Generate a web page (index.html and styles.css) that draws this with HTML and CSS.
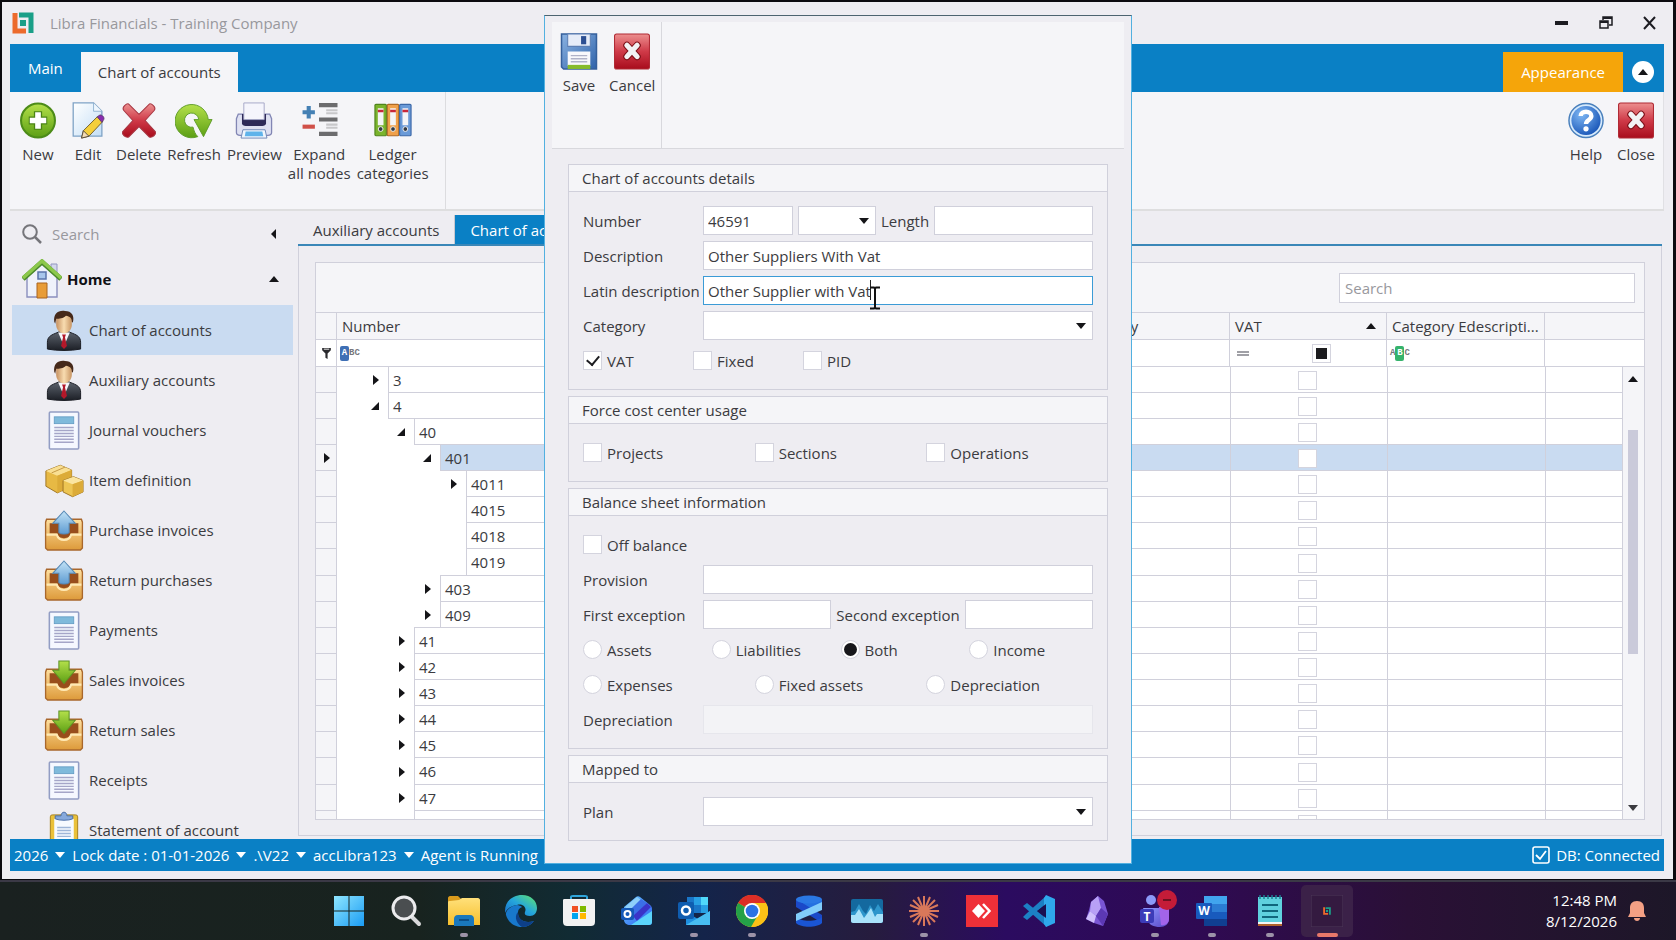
FILE: index.html
```html
<!DOCTYPE html>
<html lang="en">
<head>
<meta charset="utf-8">
<title>Libra Financials - Training Company</title>
<link rel="stylesheet" href="styles.css">
</head>
<body>
<svg class="defs" aria-hidden="true">
  <defs>
    <linearGradient id="gGreen" x1="0" y1="0" x2="0" y2="1"><stop offset="0" stop-color="#b4e04a"/><stop offset="1" stop-color="#5c9f14"/></linearGradient>
    <linearGradient id="gRed" x1="0" y1="0" x2="0" y2="1"><stop offset="0" stop-color="#ec8f8f"/><stop offset=".5" stop-color="#cf3a48"/><stop offset="1" stop-color="#a80c1c"/></linearGradient>
    <linearGradient id="gBlue" x1="0" y1="0" x2="0" y2="1"><stop offset="0" stop-color="#c2e2f6"/><stop offset="1" stop-color="#5e9cd2"/></linearGradient>
    <linearGradient id="gPaper" x1="0" y1="0" x2="1" y2="1"><stop offset="0" stop-color="#ffffff"/><stop offset="1" stop-color="#c3def6"/></linearGradient>
    <linearGradient id="gTray" x1="0" y1="0" x2="0" y2="1"><stop offset="0" stop-color="#ffe0a0"/><stop offset="1" stop-color="#dd9a3a"/></linearGradient>
    <linearGradient id="gSuit" x1="0" y1="0" x2="0" y2="1"><stop offset="0" stop-color="#5e646e"/><stop offset="1" stop-color="#1c1f26"/></linearGradient>
    <linearGradient id="gFace" x1="0" y1="0" x2="1" y2="0"><stop offset="0" stop-color="#c69060"/><stop offset=".5" stop-color="#f8dcb0"/><stop offset="1" stop-color="#c99663"/></linearGradient>
    <linearGradient id="gDisk" x1="0" y1="0" x2="1" y2="1"><stop offset="0" stop-color="#8bb3e2"/><stop offset="1" stop-color="#2f62aa"/></linearGradient>
    <radialGradient id="gHelp" cx=".35" cy=".3" r=".8"><stop offset="0" stop-color="#7fb8f4"/><stop offset="1" stop-color="#1350b4"/></radialGradient>
    <linearGradient id="gWin" x1="0" y1="0" x2="1" y2="1"><stop offset="0" stop-color="#8fe6ff"/><stop offset="1" stop-color="#1a9cf4"/></linearGradient>
    <linearGradient id="gFolder" x1="0" y1="0" x2="0" y2="1"><stop offset="0" stop-color="#ffe07a"/><stop offset="1" stop-color="#f7bf2c"/></linearGradient>
    <linearGradient id="gEdge" x1="0" y1="1" x2="1" y2="0"><stop offset="0" stop-color="#1668c8"/><stop offset=".5" stop-color="#25a6dc"/><stop offset="1" stop-color="#62e66a"/></linearGradient>
    <linearGradient id="gMail" x1="0" y1="0" x2="1" y2="1"><stop offset="0" stop-color="#6ac8ff"/><stop offset="1" stop-color="#2a5cf0"/></linearGradient>
    <linearGradient id="gTeams" x1="0" y1="0" x2="1" y2="1"><stop offset="0" stop-color="#8f9aff"/><stop offset="1" stop-color="#5a48c8"/></linearGradient>

    <symbol id="person" viewBox="0 0 36 42">
      <path d="M1 40V33c0-5 3-7 8-9l5-2h8l5 2c5 2 8 4 8 9v7c-10 2-24 2-34 0z" fill="url(#gSuit)" stroke="#1b1d24" stroke-width="1"/>
      <path d="M12 23l6 14 6-14z" fill="#f6f6fa"/><path d="M16 25h4l-1 3 2 9-3 3-3-3 2-9z" fill="#b3182a"/>
      <path d="M10 9c0-5 3-7 8-7s8 2 8 7v6c0 5-4 9-8 9s-8-4-8-9z" fill="url(#gFace)"/>
      <path d="M8 12C7 4 12 0 19 1c7 0 10 5 8 12l-1-1c0-4-2-5-6-6-3 3-7 3-10 3l-1 5z" fill="#45291a"/>
    </symbol>
    <symbol id="doc" viewBox="0 0 34 42">
      <rect x="2" y="2" width="30" height="38" rx="1" fill="#f5f8ff" stroke="#929dc4" stroke-width="1.6"/>
      <rect x="7" y="7" width="20" height="7" fill="#7fbadb" stroke="#5f99c2" stroke-width=".8"/>
      <path d="M7 18h20M7 21h20M7 24h20M7 27h20M7 30h20M7 33h20" stroke="#a5a6c8" stroke-width="1.5"/>
    </symbol>
    <symbol id="boxes" viewBox="0 0 42 36">
      <path d="M2 8l15-6 12 5v17l-15 7L2 24z" fill="#e7b944" stroke="#9e7424"/>
      <path d="M2 8l12 5 15-6-12-5z" fill="#f9df92"/><path d="M14 13v18l15-7V7z" fill="#dcab38"/><path d="M8 10l14-6" stroke="#c29641"/>
      <path d="M20 18l11-4 10 4v12l-11 5-10-5z" fill="#edc553" stroke="#9e7424"/>
      <path d="M20 18l10 4 11-4-10-4z" fill="#fbe5a0"/><path d="M30 22v13l11-5V18z" fill="#dcab38"/>
    </symbol>
    <symbol id="tray" viewBox="0 0 38 40">
      <path d="M2 9h34l1 3v25l-2 2H3l-2-2V12z" fill="url(#gTray)" stroke="#a9672c" stroke-width="1.4"/>
      <path d="M5 13h28v10h-7c-1 6-13 6-14 0H5z" fill="#984e1c"/>
      <path d="M2 24h10c2 7 12 7 14 0h10" fill="none" stroke="#ffe9b4" stroke-width="2"/>
    </symbol>
    <symbol id="trayup" viewBox="0 0 38 40"><use href="#tray"/><path d="M19 1l11 12h-6v9c-2 2-8 2-10 0v-9H8z" fill="url(#gBlue)" stroke="#5688b4"/></symbol>
    <symbol id="traydown" viewBox="0 0 38 40"><use href="#tray"/><path d="M14 1h10v9h6L19 23 8 10h6z" fill="url(#gGreen)" stroke="#5d9226"/></symbol>
    <symbol id="clip" viewBox="0 0 34 42">
      <rect x="3" y="5" width="28" height="35" rx="2" fill="#eac13a" stroke="#a8811c"/>
      <path d="M7 9h20v30H7z" fill="#f6faff"/><path d="M10 18h14M10 21h14M10 24h14M10 27h14" stroke="#9fb6d8" stroke-width="1.5"/>
      <path d="M8 9V6h6c0-5 6-5 6 0h6v3c-4 2-14 2-18 0z" fill="#86a9dc" stroke="#4a6ea8"/>
    </symbol>
    <symbol id="redx" viewBox="0 0 36 36">
      <rect x="1" y="1" width="34" height="34" rx="2" fill="url(#gRed)" stroke="#b02a34"/>
      <path d="M13 12l10 11M23 12L13 23" stroke="#7c1018" stroke-width="7" stroke-linecap="round"/>
      <path d="M13 12l10 11M23 12L13 23" stroke="#f2f2f4" stroke-width="5" stroke-linecap="round"/>
    </symbol>
    <symbol id="logo" viewBox="0 0 22 22">
      <path d="M3 1v18h11" fill="none" stroke="#ec6a2c" stroke-width="5"/><path d="M7 3h12v18" fill="none" stroke="#1a9f88" stroke-width="5"/>
      <rect x="8" y="8" width="6" height="6" fill="#1a9f88"/>
    </symbol>
  </defs>
</svg>

<div class="window">
  <header class="titlebar">
    <svg class="logo"><use href="#logo"/></svg>
    <h1 class="title">Libra Financials - Training Company</h1>
    <div class="winbtns">
      <button type="button" aria-label="Minimize"><svg viewBox="0 0 14 14"><path d="M0 7h13" stroke="#1c1c22" stroke-width="4"/></svg></button>
      <button type="button" aria-label="Restore"><svg viewBox="0 0 14 14"><path d="M4 4V1h9v8h-3" fill="none" stroke="#1c1c22" stroke-width="1.500"/><path d="M4 2h9" stroke="#1c1c22" stroke-width="2"/><rect x="1" y="5" width="8" height="7" fill="none" stroke="#1c1c22" stroke-width="1.500"/><path d="M1 6h8" stroke="#1c1c22" stroke-width="2"/></svg></button>
      <button type="button" aria-label="Close window"><svg viewBox="0 0 14 14"><path d="M1 1l11 12M12 1L1 13" stroke="#1c1c22" stroke-width="2"/></svg></button>
    </div>
  </header>

  <nav class="ribbon-tabs">
    <button type="button" class="rtab">Main</button>
    <button type="button" class="rtab rtab-active">Chart of accounts</button>
    <button type="button" class="rtab rtab-look">Appearance</button>
    <button type="button" class="collapse" aria-label="Collapse ribbon"><i class="tri up"></i></button>
  </nav>

  <div class="ribbon">
    <div class="rgroup">
      <button type="button" class="rbtn"><svg viewBox="0 0 36 36"><circle cx="18" cy="18" r="16.500" fill="url(#gGreen)" stroke="#4c8b18" stroke-width="2"/><path d="M18 9v18M9 18h18" stroke="#4b8316" stroke-width="8"/><path d="M18 10v16M10 18h16" stroke="#fff" stroke-width="5.500"/></svg><span>New</span></button>
      <button type="button" class="rbtn"><svg viewBox="0 0 36 40"><path d="M2 1h22l9 9v27H2z" fill="url(#gPaper)" stroke="#7fa3c6" stroke-width="1.400"/><path d="M24 1v9h9" fill="#eef6fd" stroke="#8fb1cf"/><path d="M13 31L28 16l6 5-15 16-8 2z" fill="#f4cf3c" stroke="#6b5a2c"/><path d="M28 16l3-2c3 0 5 3 4 5l-2 3z" fill="#8a2bb0" stroke="#5c3c70"/><path d="M13 31l6 6-8 2z" fill="#f3dcb4" stroke="#54493a"/></svg><span>Edit</span></button>
      <button type="button" class="rbtn"><svg viewBox="0 0 36 36"><path d="M8 2l10 10L28 2c2-1 7 3 5 6L24 18l10 11c1 3-3 6-6 5L18 24 8 34c-3 1-7-2-6-5l10-11L3 8C1 5 6 1 8 2z" fill="url(#gRed)" stroke="#a83844"/></svg><span>Delete</span></button>
      <button type="button" class="rbtn"><svg viewBox="0 0 40 36"><path d="M20 36A17.500 17.500 0 1 1 35 17h4L30 35 20 17h5a7.500 7.500 0 1 0-6 8c1 4 2 7 5 10z" fill="url(#gGreen)" stroke="#5f9c2a"/></svg><span>Refresh</span></button>
      <button type="button" class="rbtn"><svg viewBox="0 0 40 40"><path d="M3 13h34l2 5v15c0 2-2 3-4 3H5c-2 0-4-1-4-3V18z" fill="#dfe1f2" stroke="#8286b4" stroke-width="1.400"/><path d="M7 13v10c0 2 2 3 4 3h18c2 0 4-1 4-3V13z" fill="#2e2a58"/><path d="M9 1h22v18H9z" fill="#f5f5fc" stroke="#a3a5c6"/><path d="M8 30h24l2 9H6z" fill="#f0f6fd" stroke="#6b84b4"/><path d="M11 32h18l1 5H10z" fill="#5fb3ea"/></svg><span>Preview</span></button>
      <button type="button" class="rbtn"><svg viewBox="0 0 36 36"><path d="M8 4v12M2 10h12" stroke="#4480b4" stroke-width="4"/><path d="M2 24h12" stroke="#d05048" stroke-width="4"/><path d="M18 3h18M18 17h18M18 31h18" stroke="#6c6c6e" stroke-width="4"/><path d="M25 8h11M25 11h11M25 22h11M25 25h11" stroke="#c8c8ca" stroke-width="2"/></svg><span>Expand<br>all nodes</span></button>
      <button type="button" class="rbtn"><svg viewBox="0 0 40 36"><g stroke-width="1.200"><rect x="1" y="1" width="12" height="33" rx="1" fill="#7ab42c" stroke="#4f831c"/><rect x="14" y="1" width="12" height="33" rx="1" fill="#f0a04a" stroke="#b06a24"/><rect x="27" y="1" width="12" height="33" rx="1" fill="#6a9ad8" stroke="#3c68a8"/></g><path d="M4 5h6v18H4zM17 5h6v18h-6zM30 5h6v18h-6z" fill="#f4f4f6"/><path d="M4 8h6M17 8h6M30 8h6" stroke="#c8283a" stroke-width="2.500"/><g fill="#333a44" stroke="#eee"><circle cx="7" cy="27" r="2.500"/><circle cx="20" cy="27" r="2.500"/><circle cx="33" cy="27" r="2.500"/></g></svg><span>Ledger<br>categories</span></button>
    </div>
    <div class="rgroup rgroup-end">
      <button type="button" class="rbtn"><svg viewBox="0 0 38 38"><circle cx="19" cy="19" r="17.500" fill="#d6eafc" stroke="#4a80bc" stroke-width="1.500"/><circle cx="19" cy="19" r="15" fill="url(#gHelp)"/><path d="M13.500 14.500c0-6 11-6 11 0 0 4-5.500 4-5.500 8" fill="none" stroke="#fff" stroke-width="4.500"/><circle cx="19" cy="27.500" r="2.700" fill="#fff"/></svg><span>Help</span></button>
      <button type="button" class="rbtn"><svg><use href="#redx"/></svg><span>Close</span></button>
    </div>
  </div>

  <div class="main">
    <aside class="sidebar">
      <div class="side-search">
        <svg viewBox="0 0 20 20"><circle cx="8" cy="8" r="6.800" fill="none" stroke="#75757a" stroke-width="2"/><path d="M13 13l6 6" stroke="#75757a" stroke-width="2.500"/></svg>
        <input type="search" aria-label="Search menu" placeholder="Search">
        <i class="tri left"></i>
      </div>
      <button type="button" class="home">
        <svg viewBox="0 0 40 40"><path d="M29 5h6v12h-6z" fill="#d3d7ec" stroke="#9296c0"/><path d="M5 18L20 5l15 13v20H5z" fill="#eff2fb" stroke="#8b8fbe" stroke-width="1.400"/><path d="M1 20L20 3l19 17" fill="none" stroke="#4c8a2c" stroke-width="5"/><path d="M1 19L20 2l19 17" fill="none" stroke="#8cc84c" stroke-width="3.500"/><path d="M16 13h8v7h-8z" fill="#a8c6ec" stroke="#5b74ac" stroke-width="1.500"/><path d="M15 24h10v15H15z" fill="#e89c38" stroke="#a86420"/></svg>
        <span>Home</span><i class="tri up"></i>
      </button>
      <ul class="menu">
        <li><a href="#" class="on"><svg><use href="#person"/></svg>Chart of accounts</a></li>
        <li><a href="#"><svg><use href="#person"/></svg>Auxiliary accounts</a></li>
        <li><a href="#"><svg><use href="#doc"/></svg>Journal vouchers</a></li>
        <li><a href="#"><svg><use href="#boxes"/></svg>Item definition</a></li>
        <li><a href="#"><svg><use href="#trayup"/></svg>Purchase invoices</a></li>
        <li><a href="#"><svg><use href="#trayup"/></svg>Return purchases</a></li>
        <li><a href="#"><svg><use href="#doc"/></svg>Payments</a></li>
        <li><a href="#"><svg><use href="#traydown"/></svg>Sales invoices</a></li>
        <li><a href="#"><svg><use href="#traydown"/></svg>Return sales</a></li>
        <li><a href="#"><svg><use href="#doc"/></svg>Receipts</a></li>
        <li><a href="#"><svg><use href="#clip"/></svg>Statement of account</a></li>
      </ul>
    </aside>

    <section class="docs">
      <div class="doc-tabs">
        <button type="button" class="dtab">Auxiliary accounts</button>
        <button type="button" class="dtab dtab-on">Chart of accounts</button>
      </div>
      <div class="doc-body">
        <div class="grid">
          <div class="grid-search"><input type="search" aria-label="Search accounts" placeholder="Search"></div>
          <table class="head">
            <colgroup><col class="c-ind"><col><col class="c-cat"><col class="c-vat"><col class="c-ed"><col class="c-pad"></colgroup>
            <tr class="titles"><th></th><th>Number</th><th>Category</th><th><span class="sort">VAT<i class="tri up"></i></span></th><th>Category Edescripti...</th><th></th></tr>
            <tr class="filters">
              <td class="ind"><svg class="funnel" viewBox="0 0 10 12"><path d="M1 1h8v2L6 6v5l-2-1V6L1 3z" fill="#2a2a2e"/><path d="M2.500 2h5" stroke="#ddd"/></svg></td>
              <td><span class="abc"><b class="a">A</b>BC</span></td><td></td>
              <td><span class="vatfilter"><i class="eq"></i><input type="checkbox" class="box mixed" aria-label="Filter by VAT"></span></td>
              <td><span class="abc">A<b class="b">B</b>C</span></td><td></td>
            </tr>
          </table>
          <div class="rows">
            <table class="body">
              <colgroup><col class="c-ind"><col><col class="c-cat"><col class="c-vat"><col class="c-ed"><col class="c-end"></colgroup>
              <tr><td class="ind"></td><td class="num"><div class="node l1"><i class="tri right"></i><span>3</span></div></td><td></td><td class="chk"><input type="checkbox" class="box" aria-label="VAT 3"></td><td></td><td></td></tr>
              <tr><td class="ind"></td><td class="num"><div class="node l1"><i class="tri open"></i><span>4</span></div></td><td></td><td class="chk"><input type="checkbox" class="box" aria-label="VAT 4"></td><td></td><td></td></tr>
              <tr><td class="ind"></td><td class="num"><div class="node l2"><i class="tri open"></i><span>40</span></div></td><td></td><td class="chk"><input type="checkbox" class="box" aria-label="VAT 40"></td><td></td><td></td></tr>
              <tr class="sel"><td class="ind"><i class="tri right"></i></td><td class="num"><div class="node l3"><i class="tri open"></i><span>401</span></div></td><td></td><td class="chk"><input type="checkbox" class="box" aria-label="VAT 401"></td><td></td><td></td></tr>
              <tr><td class="ind"></td><td class="num"><div class="node l4"><i class="tri right"></i><span>4011</span></div></td><td></td><td class="chk"><input type="checkbox" class="box" aria-label="VAT 4011"></td><td></td><td></td></tr>
              <tr><td class="ind"></td><td class="num"><div class="node l4"><span>4015</span></div></td><td></td><td class="chk"><input type="checkbox" class="box" aria-label="VAT 4015"></td><td></td><td></td></tr>
              <tr><td class="ind"></td><td class="num"><div class="node l4"><span>4018</span></div></td><td></td><td class="chk"><input type="checkbox" class="box" aria-label="VAT 4018"></td><td></td><td></td></tr>
              <tr><td class="ind"></td><td class="num"><div class="node l4"><span>4019</span></div></td><td></td><td class="chk"><input type="checkbox" class="box" aria-label="VAT 4019"></td><td></td><td></td></tr>
              <tr><td class="ind"></td><td class="num"><div class="node l3"><i class="tri right"></i><span>403</span></div></td><td></td><td class="chk"><input type="checkbox" class="box" aria-label="VAT 403"></td><td></td><td></td></tr>
              <tr><td class="ind"></td><td class="num"><div class="node l3"><i class="tri right"></i><span>409</span></div></td><td></td><td class="chk"><input type="checkbox" class="box" aria-label="VAT 409"></td><td></td><td></td></tr>
              <tr><td class="ind"></td><td class="num"><div class="node l2"><i class="tri right"></i><span>41</span></div></td><td></td><td class="chk"><input type="checkbox" class="box" aria-label="VAT 41"></td><td></td><td></td></tr>
              <tr><td class="ind"></td><td class="num"><div class="node l2"><i class="tri right"></i><span>42</span></div></td><td></td><td class="chk"><input type="checkbox" class="box" aria-label="VAT 42"></td><td></td><td></td></tr>
              <tr><td class="ind"></td><td class="num"><div class="node l2"><i class="tri right"></i><span>43</span></div></td><td></td><td class="chk"><input type="checkbox" class="box" aria-label="VAT 43"></td><td></td><td></td></tr>
              <tr><td class="ind"></td><td class="num"><div class="node l2"><i class="tri right"></i><span>44</span></div></td><td></td><td class="chk"><input type="checkbox" class="box" aria-label="VAT 44"></td><td></td><td></td></tr>
              <tr><td class="ind"></td><td class="num"><div class="node l2"><i class="tri right"></i><span>45</span></div></td><td></td><td class="chk"><input type="checkbox" class="box" aria-label="VAT 45"></td><td></td><td></td></tr>
              <tr><td class="ind"></td><td class="num"><div class="node l2"><i class="tri right"></i><span>46</span></div></td><td></td><td class="chk"><input type="checkbox" class="box" aria-label="VAT 46"></td><td></td><td></td></tr>
              <tr><td class="ind"></td><td class="num"><div class="node l2"><i class="tri right"></i><span>47</span></div></td><td></td><td class="chk"><input type="checkbox" class="box" aria-label="VAT 47"></td><td></td><td></td></tr>
              <tr><td class="ind"></td><td class="num"><div class="node l2"><span></span></div></td><td></td><td class="chk"><input type="checkbox" class="box" aria-label="VAT next"></td><td></td><td></td></tr>
            </table>
            <div class="scroll"><i class="tri up"></i><div class="thumb"></div><i class="tri down"></i></div>
          </div>
        </div>
      </div>
    </section>
  </div>

  <footer class="status">
    <button type="button">2026<i class="tri down"></i></button>
    <button type="button">Lock date : 01-01-2026<i class="tri down"></i></button>
    <button type="button">.\V22<i class="tri down"></i></button>
    <button type="button">accLibra123<i class="tri down"></i></button>
    <span>Agent is Running</span>
    <span class="db"><svg viewBox="0 0 18 18"><rect x="1" y="1" width="16" height="16" rx="2" fill="none" stroke="#fff" stroke-width="1.600"/><path d="M4 9l4 4 6-8" fill="none" stroke="#fff" stroke-width="1.800"/></svg>DB: Connected</span>
  </footer>
</div>

<form class="dialog">
  <div class="dlg-ribbon">
    <div class="dlg-group">
      <button type="button" class="rbtn"><svg viewBox="0 0 36 36"><path d="M1 1h34v34H3l-2-2z" fill="url(#gDisk)" stroke="#36609c" stroke-width="1.500"/><path d="M7 1h22v12H7z" fill="#e6ecf8" stroke="#5d7fb4"/><path d="M20 3h5v8h-5z" fill="#2c4f92"/><path d="M7 18h22v14H7z" fill="#f8f8fc"/><path d="M10 22h16M10 25h16M10 28h16" stroke="#b0b2c8" stroke-width="1.400"/><path d="M7 31h22v4H7z" fill="#86bb2c"/></svg><span>Save</span></button>
      <button type="button" class="rbtn"><svg><use href="#redx"/></svg><span>Cancel</span></button>
    </div>
  </div>

  <div class="panels">
    <fieldset class="panel" aria-labelledby="p1">
      <h2 id="p1">Chart of accounts details</h2>
      <div class="pbody">
        <div class="line"><label class="lab" for="num">Number</label><input class="txt w-num" id="num" type="text" value="46591"><span class="drop w-kind"><select aria-label="Number kind"><option></option></select><i class="tri down"></i></span><label for="len">Length</label><input class="txt" id="len" type="text"></div>
        <div class="line"><label class="lab" for="desc">Description</label><input class="txt" id="desc" type="text" value="Other Suppliers With Vat"></div>
        <div class="line"><label class="lab" for="latin">Latin description</label><span class="focusbox"><input class="txt focus" id="latin" type="text" value="Other Supplier with Vat"><i class="caret"></i><svg class="ibeam" viewBox="0 0 12 24"><path d="M1 1.500h4l1 1 1-1h4M6 2v20M1 22.500h4l1-1 1 1h4" fill="none" stroke="#111" stroke-width="2"/></svg></span></div>
        <div class="line"><label class="lab" for="cat">Category</label><span class="drop"><select id="cat"><option></option></select><i class="tri down"></i></span></div>
        <div class="line flags">
          <label><input type="checkbox" class="box" checked>VAT</label>
          <label><input type="checkbox" class="box">Fixed</label>
          <label><input type="checkbox" class="box">PID</label>
        </div>
      </div>
    </fieldset>

    <fieldset class="panel" aria-labelledby="p2">
      <h2 id="p2">Force cost center usage</h2>
      <div class="pbody">
        <div class="line three">
          <label><input type="checkbox" class="box">Projects</label>
          <label><input type="checkbox" class="box">Sections</label>
          <label><input type="checkbox" class="box">Operations</label>
        </div>
      </div>
    </fieldset>

    <fieldset class="panel" aria-labelledby="p3">
      <h2 id="p3">Balance sheet information</h2>
      <div class="pbody">
        <div class="line three"><label><input type="checkbox" class="box">Off balance</label></div>
        <div class="line"><label class="lab" for="prov">Provision</label><input class="txt" id="prov" type="text"></div>
        <div class="line"><label class="lab" for="ex1">First exception</label><input class="txt" id="ex1" type="text"><label for="ex2">Second exception</label><input class="txt" id="ex2" type="text"></div>
        <div class="line four">
          <label><input type="radio" name="kind" class="dot">Assets</label>
          <label><input type="radio" name="kind" class="dot">Liabilities</label>
          <label><input type="radio" name="kind" class="dot" checked>Both</label>
          <label><input type="radio" name="kind" class="dot">Income</label>
        </div>
        <div class="line three">
          <label><input type="radio" name="kind" class="dot">Expenses</label>
          <label><input type="radio" name="kind" class="dot">Fixed assets</label>
          <label><input type="radio" name="kind" class="dot">Depreciation</label>
        </div>
        <div class="line"><label class="lab" for="dep">Depreciation</label><input class="txt" id="dep" type="text" disabled></div>
      </div>
    </fieldset>

    <fieldset class="panel" aria-labelledby="p4">
      <h2 id="p4">Mapped to</h2>
      <div class="pbody">
        <div class="line"><label class="lab" for="plan">Plan</label><span class="drop"><select id="plan"><option></option></select><i class="tri down"></i></span></div>
      </div>
    </fieldset>
  </div>
</form>

<div class="taskbar">
  <div class="apps">
    <button type="button" aria-label="Start"><svg viewBox="0 0 32 32"><path d="M1 1h14.500v14.500H1zM16.500 1H31v14.500H16.500zM1 16.500h14.500V31H1zM16.500 16.500H31V31H16.500z" fill="url(#gWin)"/></svg></button>
    <button type="button" aria-label="Search"><svg viewBox="0 0 32 32"><path d="M20 20l9 9" stroke="#d8d8da" stroke-width="4" stroke-linecap="round"/><circle cx="14" cy="13" r="11" fill="#4a4e50" stroke="#ececee" stroke-width="3"/></svg></button>
    <button type="button" class="run" aria-label="File Explorer"><svg viewBox="0 0 32 32"><path d="M0 3c0-1 1-2 2-2h8l3 3v6H0z" fill="#d99a1c"/><path d="M0 7c0-1 1-1 2-1l9-1 3-2h16c1 0 2 1 2 2v25H0z" fill="url(#gFolder)"/><path d="M6 31v-7c0-2 1-4 4-4h12c3 0 4 2 4 4v7z" fill="#1a78bc"/><path d="M11 25h10" stroke="#0c4f88" stroke-width="2"/></svg></button>
    <button type="button" aria-label="Edge"><svg viewBox="0 0 32 32"><path d="M0 16C0 6 8 0 17 0c9 0 15 6 15 13 0 5-3 8-7 8-4 0-6-1-5-4 2-4-2-9-8-7C5 11 1 15 0 18z" fill="url(#gEdge)"/><path d="M12 10C5 11 0 16 1 20c2 7 8 12 16 12 5 0 9-2 12-6-9 3-16-1-16-8 0-4 2-5 4-6-1-1-3-2-5-2z" fill="#1878cc"/><path d="M13 17c-5 5 0 13 4 15 5 0 9-2 12-6-9 3-16-1-16-9z" fill="#0d3f88"/></svg></button>
    <button type="button" aria-label="Store"><svg viewBox="0 0 32 32"><path d="M8 6V2c0-1 1-1 2-1h12c1 0 2 0 2 1v4" fill="none" stroke="#2fa6dc" stroke-width="2"/><path d="M0 5c0-1 1-1 2-1h28c1 0 2 0 2 1v22c0 3-2 4-4 4H4c-2 0-4-1-4-4z" fill="#f2f2f2"/><path d="M9 11h6v6H9z" fill="#f05022"/><path d="M17 11h6v6h-6z" fill="#7fba00"/><path d="M9 18h6v6H9z" fill="#00a4ef"/><path d="M17 18h6v6h-6z" fill="#ffb900"/></svg></button>
    <button type="button" aria-label="Outlook new"><svg viewBox="0 0 32 32"><path d="M3 12L15 2c1-1 3-1 4 0l10 8c2 2 2 3 2 5v12c0 2-1 3-3 3H9c-3 0-6-2-6-5z" fill="url(#gMail)"/><path d="M4 12L16 2l4 3L8 16z" fill="#8ed0fa"/><path d="M8 16L20 4l6 4-14 14z" fill="#3b6fe6"/><path d="M12 21l14-13 4 4-14 14z" fill="#3a34c8"/><path d="M31 16v11c0 2-1 3-3 3H10z" fill="#5bd4fb"/><rect x="0" y="13" width="13" height="12" rx="2" fill="#1559b8"/><circle cx="6.500" cy="19" r="3" fill="none" stroke="#fff" stroke-width="2"/></svg></button>
    <button type="button" class="run" aria-label="Outlook"><svg viewBox="0 0 32 32"><path d="M9 2h21v16H9z" fill="#1976c8"/><path d="M16 2h7v8h-7z" fill="#28a0e4"/><path d="M23 2h7v8h-7z" fill="#50d8fa"/><path d="M23 10h7v8h-7z" fill="#28a0e4"/><path d="M8 17l12 7 12-8v14H8z" fill="#1e8fe0"/><path d="M8 30l24-14v14z" fill="#48bdf2"/><rect x="0" y="7" width="16" height="17" rx="2" fill="#0f5db0"/><circle cx="8" cy="15.500" r="4" fill="none" stroke="#fff" stroke-width="2.500"/></svg></button>
    <button type="button" class="run" aria-label="Chrome"><svg viewBox="0 0 32 32"><circle cx="16" cy="16" r="16" fill="#fbc116"/><path d="M16 16L2.100 8A16 16 0 0 1 30 8z" fill="#dc2e26"/><path d="M16 16L2.100 8A16 16 0 0 0 15 32l7-12z" fill="#24a148"/><path d="M16 8h14a16 16 0 0 1-14 24l7-12z" fill="#fbc116"/><circle cx="16" cy="16" r="8" fill="#fff"/><circle cx="16" cy="16" r="6.300" fill="#2c72e4"/></svg></button>
    <button type="button" aria-label="Azure Data"><svg viewBox="0 0 32 32"><path d="M3 4c2 5 24 5 26 0v6c-6 5-20 5-26 0z" fill="#2470e0"/><path d="M3 4v8l26 16v-8z" fill="#1b49c8"/><path d="M3 22c5 5 21 5 26 0v6c-5 5-21 5-26 0z" fill="#1a55d4"/><path d="M29 7v8L3 26v-7z" fill="#82cdfa"/><ellipse cx="16" cy="4.500" rx="13" ry="4" fill="#2a78e4"/></svg></button>
    <button type="button" aria-label="Monitor"><svg viewBox="0 0 32 32"><rect x="0" y="4" width="32" height="24" rx="2" fill="#14699f"/><path d="M0 17l4-1 4-7 4 7 3 3 4-9 4 6 4-7 5 8v9H0z" fill="#2e96cc"/><path d="M0 20h4l4-6 5 9 3-4 4-6 4 9 2-3h6v7c0 1-1 2-2 2H2c-1 0-2-1-2-2z" fill="#a9e2fa"/></svg></button>
    <button type="button" class="run" aria-label="Claude"><svg viewBox="0 0 32 32"><path d="M16 1v30M1 16h30M5 5l22 22M27 5L5 27M10 2l12 28M22 2L10 30M2 10l28 12M2 22l28-12" stroke="#d9785a" stroke-width="2"/><circle cx="16" cy="16" r="5" fill="#d9785a"/></svg></button>
    <button type="button" aria-label="AnyDesk"><svg viewBox="0 0 32 32"><path d="M0 0h32v32H0z" fill="#ef3038"/><path d="M6 16l6.500-7 6.500 7-6.500 7z" fill="#fff"/><path d="M17 9l6.500 7-6.500 7" fill="none" stroke="#fff" stroke-width="2.500"/></svg></button>
    <button type="button" aria-label="Code editor"><svg viewBox="0 0 32 32"><path d="M23 1L3 19l-3 3 4 3L24 8z" fill="#1c80c4"/><path d="M0 11l4-3 20 16v8z" fill="#1c80c4"/><path d="M23 0l9 4v24l-9 4-2-3V3z" fill="#2fa8ec"/><path d="M23 9v14l-9-7z" fill="#1a1050"/></svg></button>
    <button type="button" aria-label="Obsidian"><svg viewBox="0 0 32 32"><path d="M17 1l6 5 4 13-5 12-9-3-8-4 3-9 2-8z" fill="#7a56d4"/><path d="M17 1l-7 6-1 9 6 5 5-8z" fill="#b8a0f6"/><path d="M20 13l7 6-5 12-7-10z" fill="#5c38b4"/><path d="M9 16l6 5-2 7-8-4z" fill="#d0c0fc"/></svg></button>
    <button type="button" class="run" aria-label="Teams"><svg viewBox="0 0 32 32"><circle cx="12" cy="5" r="5" fill="#8c9af8"/><path d="M4 13h24c1 0 2 1 2 2v9c0 5-4 8-9 8-6 0-12-2-12-8z" fill="url(#gTeams)"/><path d="M20 12h10v12c0 4-4 7-8 6z" fill="#a264ea"/><rect x="1" y="14" width="14" height="14" rx="2" fill="#3c3cb8"/><text x="8" y="26" text-anchor="middle" class="glyph">T</text></svg><i class="badge"></i></button>
    <button type="button" class="run" aria-label="Word"><svg viewBox="0 0 32 32"><path d="M8 1h23v8H8z" fill="#41a5ee"/><path d="M8 9h23v8H8z" fill="#2b7cd3"/><path d="M8 17h23v7H8z" fill="#185abd"/><path d="M8 24h23v7H8z" fill="#103f91"/><rect x="0" y="8" width="16" height="16" rx="1" fill="#185abd"/><text x="8" y="20" text-anchor="middle" class="glyph">W</text></svg></button>
    <button type="button" class="run" aria-label="Notepad"><svg viewBox="0 0 32 32"><path d="M4 2h24v27H4z" fill="#5fd0de"/><path d="M4 27h24v2H4z" fill="#f4f4f4"/><path d="M4 29h24v2H4z" fill="#b0622c"/><path d="M8 10h16M8 16h16M8 22h16" stroke="#10667c" stroke-width="2"/><path d="M6 0v4M10 0v4M14 0v4M18 0v4M22 0v4M26 0v4" stroke="#1b7f92" stroke-width="1.500"/></svg></button>
    <button type="button" class="run current" aria-label="Libra"><svg viewBox="0 0 32 32"><rect x="0" y="0" width="32" height="32" fill="#341a40" stroke="#4c3858"/><use href="#logo" x="12" y="12" width="8" height="8"/></svg></button>
  </div>
  <div class="tray"><div class="clock">12:48 PM<br>8/12/2026</div><svg viewBox="0 0 18 20"><path d="M9 0c5 0 7 3 7 7v5l2 4H0l2-4V7c0-4 2-7 7-7z" fill="#f4a084"/><path d="M6 17h6c0 4-6 4-6 0z" fill="#f4a084"/></svg></div>
</div>
</body>
</html>
```
FILE: styles.css
```css
:root {
  --blue: #0a80c5;
  --bg: #eeedf2;
  --pale: #f5f5f8;
  --rule: #d0d0db;
  --ink: #3b3b40;
  --sel: #c9dbf1;
}
* { box-sizing: border-box; }
body {
  margin: 0;
  min-height: 100vh;
  display: flex;
  flex-direction: column;
  background: #0c0b10;
  color: var(--ink);
  font: 15px/20px "Open Sans", "Noto Sans", sans-serif;
  position: relative;
  overflow: hidden;
}
button, input, select { font: inherit; color: inherit; margin: 0; }
button { border: 0; padding: 0; background: none; }
.defs { position: absolute; width: 0; height: 0; }

.tri { flex: none; width: 0; height: 0; border: 5px solid transparent; display: block; }
.tri.up { border-top: 0; border-bottom: 6px solid #151518; }
.tri.down { border-bottom: 0; border-top: 6px solid currentColor; }
.tri.left { border-left: 0; border-right: 5px solid #151518; }
.tri.right { border-right: 0; border-left: 6px solid #151518; }
.tri.open { border-width: 0 0 8px 8px; border-color: transparent transparent #151518; }

/* window frame */
.window {
  flex: 1;
  min-height: 0;
  margin: 2px 3px 1px 2px;
  padding: 0 9px 8px 8px;
  background: var(--bg);
  display: flex;
  flex-direction: column;
}
.titlebar { height: 42px; display: flex; align-items: center; padding: 0 7px 0 2px; }
.logo { width: 22px; height: 22px; }
.title { margin: 0 0 0 16px; font-size: 15px; font-weight: 400; color: #98989d; }
.winbtns { margin-left: auto; display: flex; gap: 30px; }
.winbtns svg { display: block; width: 14px; height: 14px; }

.ribbon-tabs { height: 48px; background: var(--blue); display: flex; align-items: flex-end; }
.rtab { height: 40px; padding: 0 17px; color: #fff; }
.rtab:first-child { height: 48px; padding: 0 18px; }
.rtab.rtab-active { background: var(--pale); color: var(--ink); }
.rtab.rtab-look { margin-left: auto; background: #f5a50a; padding: 0 18px; }
.collapse { width: 22px; height: 22px; margin: 0 10px 9px 9px; border-radius: 50%; background: #fff; display: grid; place-items: center; }

.ribbon { height: 119px; background: var(--pale); border-bottom: 2px solid #dededf; display: flex; justify-content: space-between; }
.rgroup { display: flex; align-items: flex-start; gap: 2px; padding: 10px 14px 0 4px; border-right: 1px solid #dcdcdf; }
.rgroup-end { padding: 10px 3px 0 0; border-right: 1px solid #e0e0e4; }
.rbtn { min-width: 48px; padding: 0 2px; display: flex; flex-direction: column; align-items: center; gap: 6px; line-height: 19px; }
.rbtn svg { width: 38px; height: 37px; display: block; }

.main { flex: 1; min-height: 0; display: flex; }

/* sidebar */
.sidebar { width: 288px; flex: none; padding: 7px 5px 0 2px; overflow: hidden; display: flex; flex-direction: column; }
.side-search { height: 32px; display: flex; align-items: center; padding: 0 17px 0 10px; }
.side-search svg { width: 20px; height: 20px; flex: none; }
.side-search input { flex: 1; min-width: 0; border: 0; background: none; padding: 0 0 0 10px; outline: 0; }
::placeholder { color: #98989d; opacity: 1; }
.home { height: 55px; flex: none; display: flex; align-items: center; gap: 5px; padding: 3px 14px 0 10px; font-weight: 700; color: #101014; }
.home svg { width: 40px; height: 40px; }
.home .tri { margin-left: auto; }
.menu { list-style: none; margin: 0; padding: 0; flex: 1 1 0; min-height: 0; overflow: hidden; }
.menu a { height: 50px; display: flex; align-items: center; gap: 5px; padding-left: 32px; color: inherit; text-decoration: none; }
.menu svg { width: 40px; height: 41px; }
.menu .on { background: var(--sel); }

/* document area */
.docs { flex: 1; min-width: 0; display: flex; flex-direction: column; padding: 4px 2px 3px 0; }
.doc-tabs { display: flex; height: 31px; border-bottom: 2px solid #3a87b8; }
.dtab { padding: 0 15px; border-right: 1px solid #c8c8d0; }
.dtab-on { background: var(--blue); color: #fff; border: 0; }
.doc-body { flex: 1; min-height: 0; border: 1px solid var(--rule); border-top: 0; padding: 16px 16px 15px; display: flex; }
.grid { flex: 1; min-width: 0; border: 1px solid var(--rule); background: #fff; display: flex; flex-direction: column; }
.grid-search { height: 49px; flex: none; background: var(--pale); display: flex; justify-content: flex-end; align-items: center; padding-right: 9px; }
.grid-search input { width: 296px; height: 30px; border: 1px solid var(--rule); background: #fff; padding: 0 5px; outline: 0; }
table { border-collapse: separate; border-spacing: 0; table-layout: fixed; width: 100%; }
th, td { padding: 0; border-right: 1px solid var(--rule); border-bottom: 1px solid var(--rule); }
.c-ind { width: 21px; } .c-cat { width: 159px; } .c-vat { width: 157px; } .c-ed { width: 158px; } .c-pad { width: 99px; } .c-end { width: 77px; }
.head { flex: none; }
.head tr > :last-child { border-right: 0; }
.titles th { height: 28px; background: var(--pale); border-top: 1px solid var(--rule); font-weight: 400; text-align: left; padding-left: 5px; white-space: nowrap; }
.sort { display: flex; align-items: center; justify-content: space-between; padding-right: 10px; }
.filters td { height: 27px; }
.filters td:last-child { border-left: 0; }
.ind { background: var(--pale); }
.filters .ind { background: #fff; }
.ind .tri { margin-left: 8px; }
.funnel { display: block; width: 11px; height: 13px; margin: 0 auto; }
.abc { display: flex; align-items: center; padding-left: 3px; font: 700 9px/15px "Liberation Mono", monospace; color: #77777c; }
.abc b { width: 9px; text-align: center; color: #fff; border-radius: 2px; }
.abc .a { background: #3f6fb5; }
.abc .b { background: #36b36c; }
.vatfilter { display: flex; align-items: center; justify-content: space-between; padding: 0 55px 0 7px; }
.eq { width: 12px; height: 5px; border: solid #a0a0a6; border-width: 2px 0; }
.rows { flex: 1 1 0; min-height: 0; display: flex; overflow: hidden; }
.body { flex: 1; align-self: flex-start; min-width: 0; }
.body td { height: 26px; }
.body tr:nth-child(8n) td { height: 27px; }
.body .num { border-bottom: 0; border-right: 0; }
.node { height: 26px; display: flex; align-items: center; justify-content: flex-end; }
.body tr:nth-child(8n) .node, .body tr:nth-child(8n) .node span { height: 27px; }
.node .tri { margin-right: 9px; }
.node span { flex: none; height: 26px; line-height: 26px; padding-left: 4px; border-left: 1px solid var(--rule); border-bottom: 1px solid var(--rule); box-shadow: 0 -1px 0 var(--rule); }
.l1 span { width: calc(100% - 51px); }
.l2 span { width: calc(100% - 77px); }
.l3 span { width: calc(100% - 103px); }
.l4 span { width: calc(100% - 129px); }
.chk { text-align: center; padding-right: 3px; }
.sel td:not(.ind):not(.num), .sel .node span { background: var(--sel); }
.scroll { width: 21px; flex: none; background: var(--pale); display: flex; flex-direction: column; align-items: center; padding: 9px 2px 8px 0; }
.thumb { width: 10px; height: 224px; margin: 48px 0 auto; background: #cacada; }

.box, .dot { appearance: none; width: 19px; height: 19px; flex: none; display: inline-grid; place-items: center; vertical-align: middle; background: #fff; border: 1px solid #d4d4de; }
.dot { border-radius: 50%; }
.box:checked::before { content: ""; width: 6px; height: 10px; margin-bottom: 3px; border: solid #1c1c20; border-width: 0 2px 2px 0; transform: rotate(40deg); }
.dot:checked::before { content: ""; width: 13px; height: 13px; border-radius: 50%; background: #17171b; }
.mixed::before { content: ""; width: 11px; height: 11px; background: #1c1c1e; }

/* status bar */
.status { height: 32px; flex: none; background: var(--blue); color: #fff; display: flex; align-items: center; gap: 7px; padding: 0 4px; white-space: nowrap; }
.status button { display: flex; align-items: center; gap: 7px; white-space: nowrap; }
.db { margin-left: auto; display: flex; align-items: center; gap: 6px; }
.db svg { width: 18px; height: 18px; }

/* account dialog */
.dialog { position: absolute; top: 15px; left: 50%; width: 588px; margin-left: -294px; border: 1px solid #52b0e0; border-top-color: #4d6470; background: var(--bg); padding: 6px 7px 22px; }
.dlg-ribbon { height: 127px; background: var(--pale); border-bottom: 1px solid #d8d8dd; display: flex; }
.dlg-group { display: flex; align-items: flex-start; gap: 4px; padding: 11px 4px 0 3px; border-right: 1px solid #d8d8dd; }
.panels { padding: 15px 16px 0; display: flex; flex-direction: column; gap: 6px; }
.panel { margin: 0; padding: 0; min-width: 0; border: 1px solid var(--rule); }
.panel h2 { margin: 0; height: 27px; padding-left: 13px; background: var(--pale); border-bottom: 1px solid var(--rule); font-size: 15px; line-height: 26px; font-weight: 400; }
.pbody { padding: 14px; display: flex; flex-direction: column; gap: 6px; }
.line { height: 29px; display: flex; align-items: center; gap: 5px; }
.lab { width: 115px; flex: none; white-space: nowrap; }
.line label:not(.lab) { flex: none; white-space: nowrap; }
.txt { flex: 1 1 0; min-width: 0; height: 29px; border: 1px solid var(--rule); background: #fff; padding: 0 4px; outline: 0; }
.txt:disabled { background: #f3f3f6; border-color: #e6e6ec; }
.w-num { flex: 0 0 90px; }
.drop { flex: 1; position: relative; display: flex; }
.drop.w-kind { flex: 0 0 78px; }
.drop select { appearance: none; width: 100%; height: 29px; border: 1px solid var(--rule); border-radius: 0; background: #fff; }
.drop .tri { position: absolute; right: 7px; top: 12px; color: #151518; }
.focusbox { flex: 1; position: relative; display: flex; }
.focus { border: 1px solid #3b9bd6; }
.caret { position: absolute; left: 167px; top: 4px; width: 1px; height: 20px; background: #222; }
.ibeam { position: absolute; left: 166px; top: 10px; width: 12px; height: 24px; }
.flags label, .three label, .four label { display: flex; align-items: center; gap: 5px; }
.flags { display: grid; grid-template-columns: 110px 110px 110px; gap: 0; }
.three { display: grid; grid-template-columns: repeat(3, 1fr); }
.four { display: grid; grid-template-columns: repeat(4, 1fr); }

/* taskbar */
.taskbar {
  height: 60px;
  flex: none;
  display: grid;
  grid-template-columns: 1fr minmax(0, 1036px) 1fr;
  border-top: 2px solid #3b3946;
  background: linear-gradient(90deg, #1a2120 0, #18231f 25%, #112b33 34%, #14244a 42%, #261c3e 52%, #2b0b60 60%, #2f0a52 72%, #2a1036 84%, #1d1728 100%);
}
.apps { grid-column: 2; display: grid; grid-template-columns: repeat(18, 1fr); }
.apps button { position: relative; display: grid; place-items: center; }
.apps svg { width: 32px; height: 32px; }
.run::after { content: ""; position: absolute; bottom: 3px; width: 8px; height: 4px; border-radius: 2px; background: #9d93a8; }
.current { background: #3b2148; border-radius: 5px; margin: 3px; }
.run.current::after { width: 21px; bottom: 0; background: #e8786a; }
.badge { position: absolute; right: 6px; top: 8px; width: 20px; height: 20px; border-radius: 50%; background: #c41c38; display: grid; place-items: center; }
.badge::before { content: ""; width: 8px; height: 2px; background: #6c1020; }
.glyph { font: 700 12px "Open Sans", sans-serif; fill: #fff; }
.tray { display: flex; justify-content: flex-end; align-items: center; gap: 11px; padding-right: 30px; color: #fff; text-align: right; }
.clock { font-size: 15px; line-height: 21px; }
.tray svg { width: 18px; height: 20px; }
```
